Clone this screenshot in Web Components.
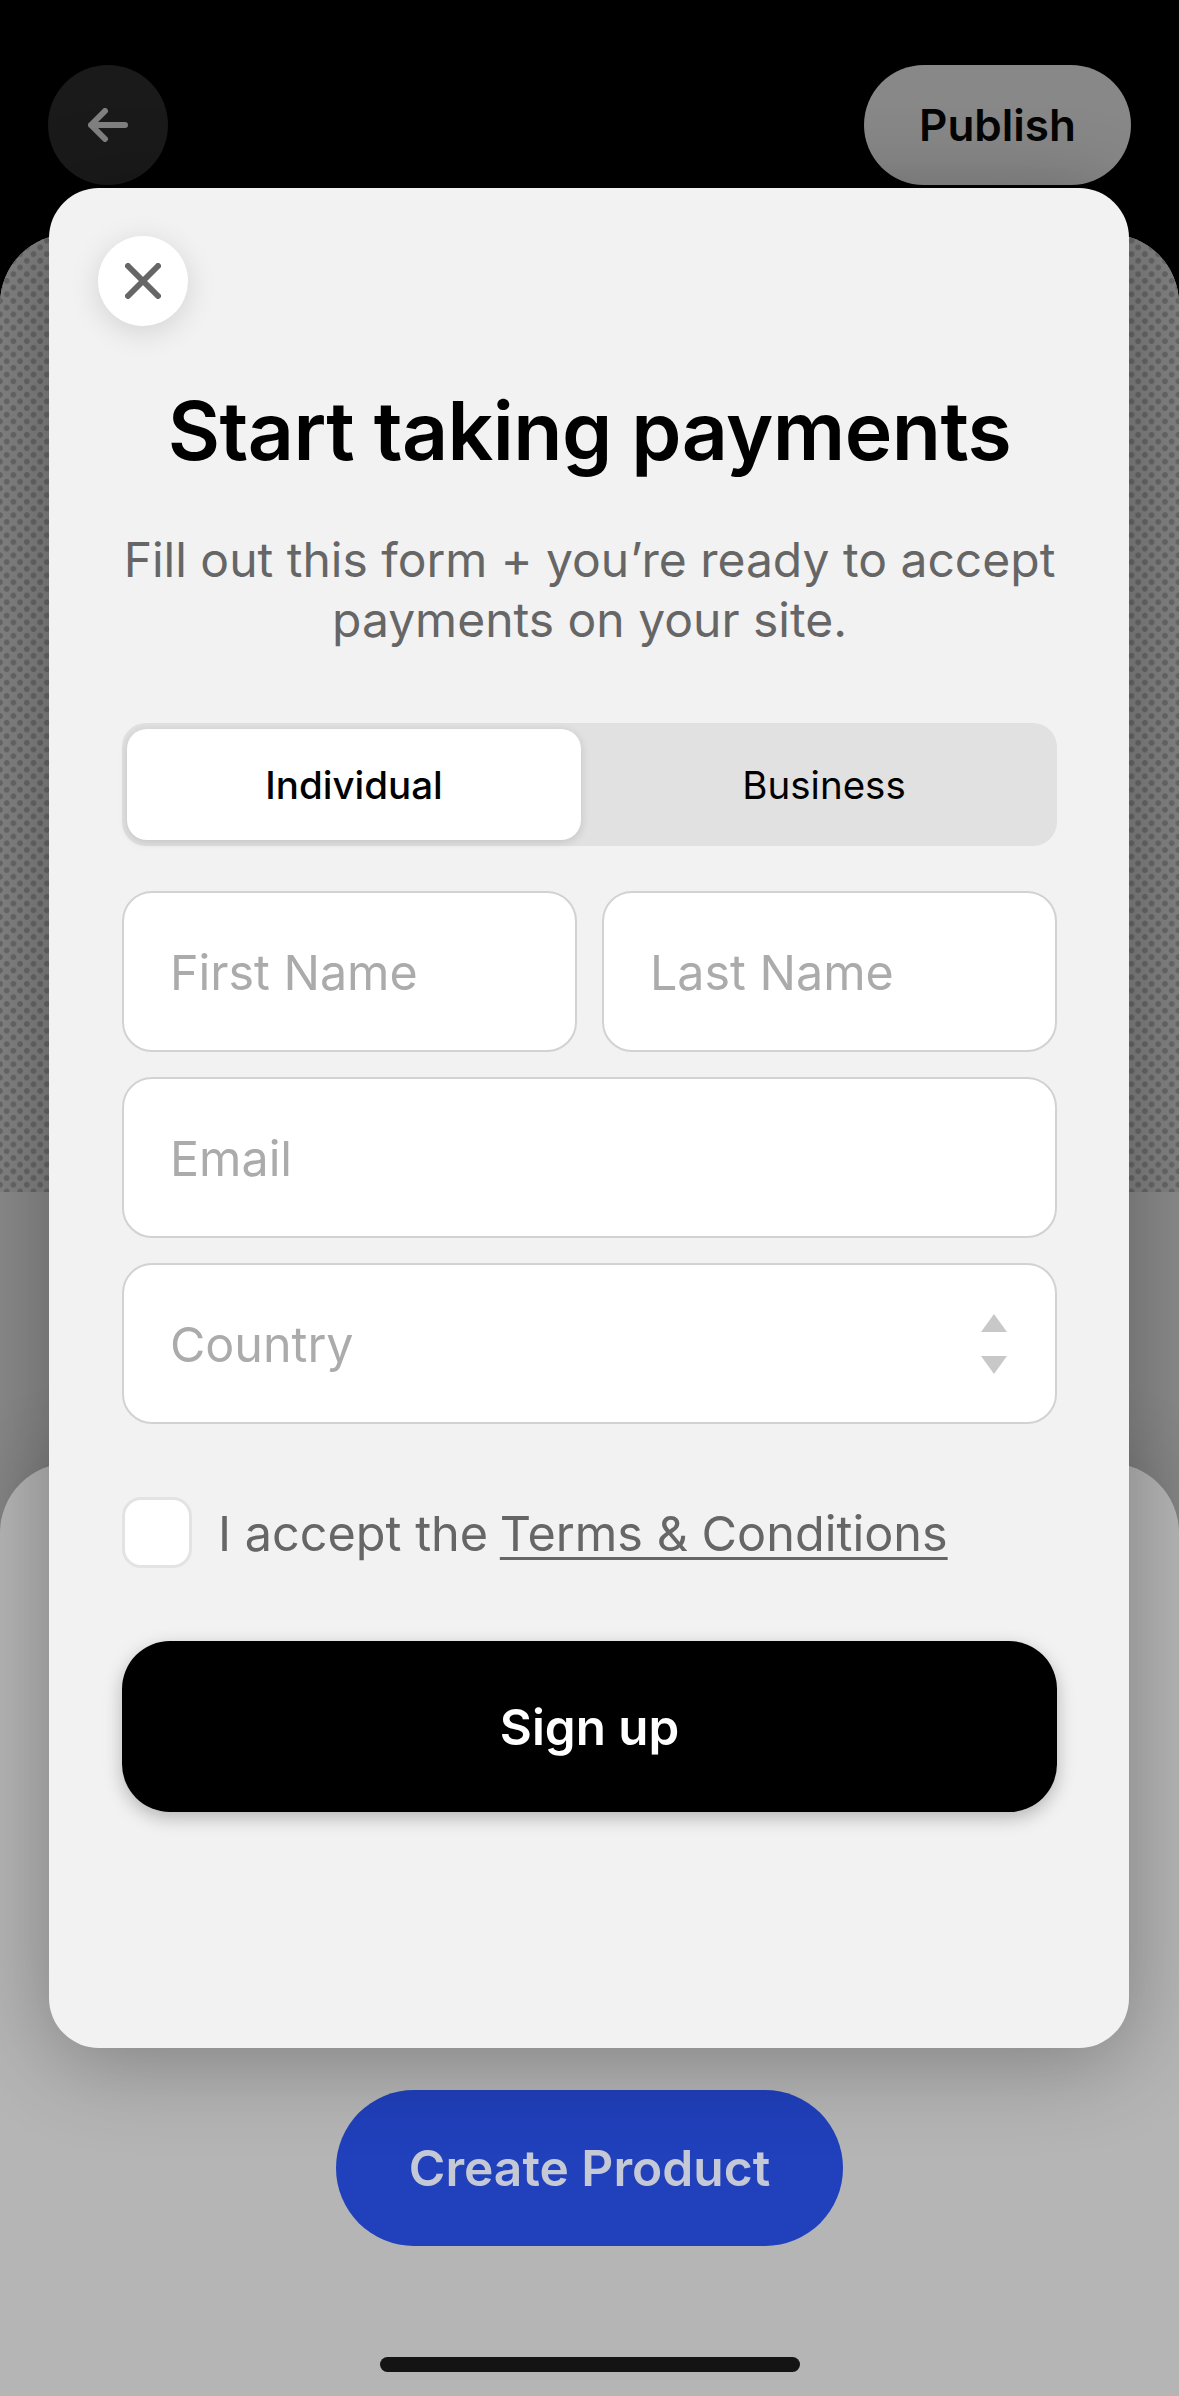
<!DOCTYPE html>
<html lang="en">
<head>
<meta charset="utf-8">
<title>Start taking payments</title>
<style>
  html, body { margin: 0; padding: 0; background: #000; }
  body { width: 1179px; height: 2396px; overflow: hidden; font-family: Inter, "Liberation Sans", sans-serif; }
</style>
</head>
<body>
<pay-screen>
  <under-page slot="page"></under-page>
  <signup-modal slot="modal">
    <close-button slot="close"></close-button>
    <span slot="title">Start taking payments</span>
    <span slot="subtitle">Fill out this form + you’re ready to accept<br>payments on your site.</span>
    <segment-control slot="segment">
      <span slot="active">Individual</span>
      <span slot="other">Business</span>
    </segment-control>
    <field-grid slot="fields">
      <text-field>First Name</text-field>
      <text-field>Last Name</text-field>
      <text-field wide>Email</text-field>
      <text-field wide select>Country</text-field>
    </field-grid>
    <terms-check slot="terms">I accept the <u>Terms &amp; Conditions</u></terms-check>
    <signup-button slot="submit">Sign up</signup-button>
  </signup-modal>
</pay-screen>

<script>
function define(name, css, html, setup) {
  customElements.define(name, class extends HTMLElement {
    constructor() {
      super();
      const root = this.attachShadow({ mode: 'open' });
      root.innerHTML = `<style>${css}</style>${html}`;
      if (setup) setup(this, root);
    }
  });
}

define('pay-screen', `
  :host { display: block; position: relative; width: 1179px; height: 2396px; overflow: hidden; background: #000; }
  .modal { position: absolute; left: 49px; top: 188px; width: 1080px; height: 1860px; }
`, `<slot name="page"></slot><div class="modal"><slot name="modal"></slot></div>`);

define('under-page', `
  :host { display: flex; flex-direction: column; width: 1179px; height: 2396px; }
  .bar { display: flex; justify-content: space-between; align-items: center; box-sizing: border-box; height: 234px; padding: 65px 48px 49px 48px; flex: none; }
  .back { width: 120px; height: 120px; border-radius: 50%; background: #1a1a1a; display: flex; align-items: center; justify-content: center; }
  .publish { width: 267px; height: 120px; border-radius: 60px; background: #888; color: #050505; display: flex; align-items: center; justify-content: center; font-size: 44px; font-weight: 600; }
  .body { position: relative; flex: 1; background: #8a8a8a; border-radius: 70px 70px 0 0; overflow: hidden; }
  .dots { height: 958px;
    background-color: #828282;
    background-image: radial-gradient(circle at center, #676767 0 2.5px, transparent 3.2px), radial-gradient(circle at center, #676767 0 2.5px, transparent 3.2px);
    background-size: 13.4px 13.4px; background-position: 0 0, 6.7px 6.7px; }
  .sheet { position: absolute; left: 0; right: 0; top: 1229px; bottom: 0; background: #b5b5b5; border-radius: 70px 70px 0 0; box-shadow: 0 -20px 70px rgba(0,0,0,.1); display: flex; flex-direction: column; align-items: center; }
  .create { margin-top: 627px; width: 507px; height: 156px; border-radius: 78px; background: #2040bc; color: #c5c9d6; display: flex; align-items: center; justify-content: center; font-size: 49.7px; font-weight: 600; flex: none; }
  .home { margin-top: 111px; width: 420px; height: 15px; border-radius: 8px; background: #141414; flex: none; }
`, `
  <div class="bar">
    <div class="back"><svg width="40" height="34" viewBox="0 0 40 34" fill="none" stroke="#808080" stroke-width="6" stroke-linecap="round" stroke-linejoin="round"><path d="M37 17H3M17 3 3 17l14 14"/></svg></div>
    <div class="publish">Publish</div>
  </div>
  <div class="body">
    <div class="dots"></div>
    <div class="sheet">
      <div class="create">Create Product</div>
      <div class="home"></div>
    </div>
  </div>
`);

define('signup-modal', `
  :host { display: flex; flex-direction: column; box-sizing: border-box; width: 1080px; height: 1860px; padding: 48px 72px 0 73px; background: #f2f2f2; border-radius: 50px; box-shadow: 0 12px 90px rgba(0,0,0,.3); }
  .title { margin: 55px -40px 1px; font-size: 80.5px; line-height: 100px; font-weight: 600; text-align: center; color: #000; letter-spacing: -.6px; }
  .sub { margin: 48px -40px 0; font-size: 48px; line-height: 60px; text-align: center; color: #666; }
  .seg { margin-top: 73px; }
  .fields { margin-top: 45px; }
  .terms { margin-top: 73px; }
  .submit { margin-top: 73px; }
`, `
  <slot name="close"></slot>
  <div class="title"><slot name="title"></slot></div>
  <div class="sub"><slot name="subtitle"></slot></div>
  <div class="seg"><slot name="segment"></slot></div>
  <div class="fields"><slot name="fields"></slot></div>
  <div class="terms"><slot name="terms"></slot></div>
  <div class="submit"><slot name="submit"></slot></div>
`);

define('close-button', `
  :host { display: flex; align-items: center; justify-content: center; width: 90px; height: 90px; margin-left: -24px; border-radius: 50%; background: #fff; box-shadow: 0 6px 30px rgba(0,0,0,.13); flex: none; }
`, `<svg width="36" height="36" viewBox="0 0 36 36" fill="none" stroke="#666" stroke-width="6" stroke-linecap="round"><path d="M3 3 33 33M33 3 3 33"/></svg>`);

define('segment-control', `
  :host { display: grid; grid-template-columns: 454px 1fr; align-items: stretch; box-sizing: border-box; height: 123px; padding: 6px 5px; background: #e1e1e1; border-radius: 24px; font-size: 38.5px; font-weight: 500; color: #000; }
  .on, .off { display: flex; align-items: center; justify-content: center; }
  .on { background: #fff; border-radius: 20px; box-shadow: 0 2px 10px rgba(0,0,0,.14); }
  .off { padding-left: 15px; font-size: 38.5px; font-weight: 400; }
`, `<div class="on"><slot name="active"></slot></div><div class="off"><slot name="other"></slot></div>`);

define('field-grid', `
  :host { display: grid; grid-template-columns: 455px 455px; gap: 25px; }
`, `<slot></slot>`);

define('text-field', `
  :host { display: flex; align-items: center; justify-content: space-between; box-sizing: border-box; height: 161px; padding: 2px 48px 0 46px; background: #fff; border: 2px solid #d2d2d2; border-radius: 30px; color: #ababab; font-size: 48.4px; }
  :host([wide]) { grid-column: 1 / -1; }
  svg { display: none; margin-top: -2px; }
  :host([select]) svg { display: block; }
`, `<span><slot></slot></span><svg width="26" height="60" viewBox="0 0 26 60" fill="#c8c8c8"><path d="M13 0 26 18H0zM0 42h26L13 60z"/></svg>`);

define('terms-check', `
  :host { display: flex; align-items: center; gap: 26px; color: #666; font-size: 48.6px; }
  .box { box-sizing: border-box; width: 70px; height: 71px; border: 3px solid #e3e3e3; border-radius: 19px; background: #fff; flex: none; }
  span { padding-top: 2px; }
  ::slotted(u) { margin-left: -2px; text-underline-offset: 6px; text-decoration-thickness: 2.5px; }
`, `<div class="box"></div><span><slot></slot></span>`);

define('signup-button', `
  :host { display: flex; align-items: center; justify-content: center; height: 171px; border-radius: 48px; background: #000; color: #fff; font-size: 49.3px; font-weight: 600; box-shadow: 0 6px 18px rgba(0,0,0,.25); }
`, `<slot></slot>`);
</script>
</body>
</html>
